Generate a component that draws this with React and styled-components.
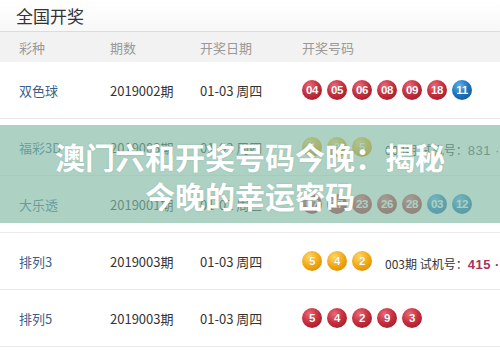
import React from "react";
import styled, { createGlobalStyle } from "styled-components";

const Global = createGlobalStyle`
  html, body { margin: 0; padding: 0; background: #fff; }
  body { font-family: "Noto Sans CJK SC", "Noto Sans", sans-serif; }
`;

const Page = styled.div`
  position: relative;
  width: 500px;
  height: 350px;
  overflow: hidden;
  background: #fff;
`;

const TitleBar = styled.div`
  height: 31px;
  display: flex;
  align-items: center;
  padding-left: 16px;
  font-size: 17px;
  color: #333;
  background: linear-gradient(#ffffff, #f8f8f8);
  border-bottom: 1px solid #dcdcdc;
`;

const Grid = styled.div`
  display: grid;
  grid-template-columns: 91px 90px 102px 1fr;
  align-items: center;
  padding-left: 19px;
  white-space: nowrap;
`;

const HeadRow = styled(Grid)`
  height: 30px;
  background: #f2f2f2;
  font-size: 13px;
  color: #999;
`;

const Row = styled(Grid)`
  height: 56px;
  border-bottom: 1px solid #ebebeb;
  font-size: 13px;
  color: #333;
`;

const Name = styled.span`
  color: #3b5f8a;
`;

const Nums = styled.div`
  display: flex;
  align-items: center;
  gap: 5px;
  overflow: hidden;
`;

const palette = {
  red: "radial-gradient(circle at 38% 30%, #ec6a78 0%, #c8303f 45%, #8f1524 100%)",
  blue: "radial-gradient(circle at 38% 30%, #63b2ee 0%, #1f78c2 45%, #0d4a8a 100%)",
  gold: "radial-gradient(circle at 38% 30%, #ffd86a 0%, #f2a812 50%, #cf7f00 100%)",
};

const Ball = styled.span`
  flex: none;
  width: 20px;
  height: 20px;
  border-radius: 50%;
  background: ${(p) => palette[p.$tone]};
  color: #fff;
  font-family: "Liberation Sans", Arial, sans-serif;
  font-weight: 700;
  font-size: 11.5px;
  line-height: 20px;
  text-align: center;
  letter-spacing: -0.3px;
  text-shadow: 0 0 1px rgba(0, 0, 0, 0.3);
`;

const Trial = styled.span`
  margin-left: 8px;
  margin-top: 7px;
  font-size: 12px;
  color: #333;
  white-space: nowrap;
`;

const TrialNum = styled.b`
  color: ${(p) => p.$color || "#a8345a"};
  font-weight: ${(p) => (p.$bold ? 700 : 400)};
  font-family: "Liberation Sans", Arial, sans-serif;
  font-size: 13px;
  letter-spacing: 0.5px;
`;

const Overlay = styled.div`
  position: absolute;
  left: 0;
  right: 0;
  top: 125px;
  height: 98px;
  background: rgba(130, 186, 166, 0.66);
  display: flex;
  justify-content: center;
  align-items: center;
  padding-top: 4px;
  box-sizing: border-box;
`;

const Headline = styled.h1`
  margin: 0;
  width: 400px;
  text-align: center;
  color: #fff;
  font-size: 30px;
  line-height: 39px;
  font-weight: 700;
  text-shadow: 0 0 2px rgba(0, 0, 0, 0.15);
`;

const rows = [
  {
    name: "双色球",
    period: "2019002期",
    date: "01-03 周四",
    balls: [
      ["04", "red"], ["05", "red"], ["06", "red"], ["08", "red"],
      ["09", "red"], ["18", "red"], ["11", "blue"],
    ],
  },
  {
    name: "福彩3D",
    period: "2019003期",
    date: "01-03 周四",
    balls: [["4", "gold"], ["3", "gold"], ["5", "gold"]],
    trial: { text: "831 · 开机号", color: "#555", bold: false },
  },
  {
    name: "大乐透",
    period: "2019001期",
    date: "01-02 周三",
    balls: [
      ["07", "red"], ["17", "red"], ["23", "red"], ["26", "red"],
      ["28", "red"], ["03", "blue"], ["12", "blue"],
    ],
  },
  {
    name: "排列3",
    period: "2019003期",
    date: "01-03 周四",
    balls: [["5", "gold"], ["4", "gold"], ["2", "gold"]],
    trial: { text: "415 · 开机号", color: "#a8345a", bold: true },
  },
  {
    name: "排列5",
    period: "2019003期",
    date: "01-03 周四",
    balls: [["5", "red"], ["4", "red"], ["2", "red"], ["9", "red"], ["3", "red"]],
  },
];

export default function App() {
  return (
    <Page>
      <Global />
      <TitleBar>全国开奖</TitleBar>
      <HeadRow>
        <span>彩种</span>
        <span>期数</span>
        <span>开奖日期</span>
        <span>开奖号码</span>
      </HeadRow>
      {rows.map((r) => (
        <Row key={r.name}>
          <Name>{r.name}</Name>
          <span>{r.period}</span>
          <span>{r.date}</span>
          <Nums>
            {r.balls.map(([n, t], i) => (
              <Ball key={i} $tone={t}>{n}</Ball>
            ))}
            {r.trial && (
              <Trial>
                003期 试机号：
                <TrialNum $color={r.trial.color} $bold={r.trial.bold}>
                  {r.trial.text}
                </TrialNum>
              </Trial>
            )}
          </Nums>
        </Row>
      ))}
      <Overlay>
        <Headline>澳门六和开奖号码今晚：揭秘今晚的幸运密码</Headline>
      </Overlay>
    </Page>
  );
}
